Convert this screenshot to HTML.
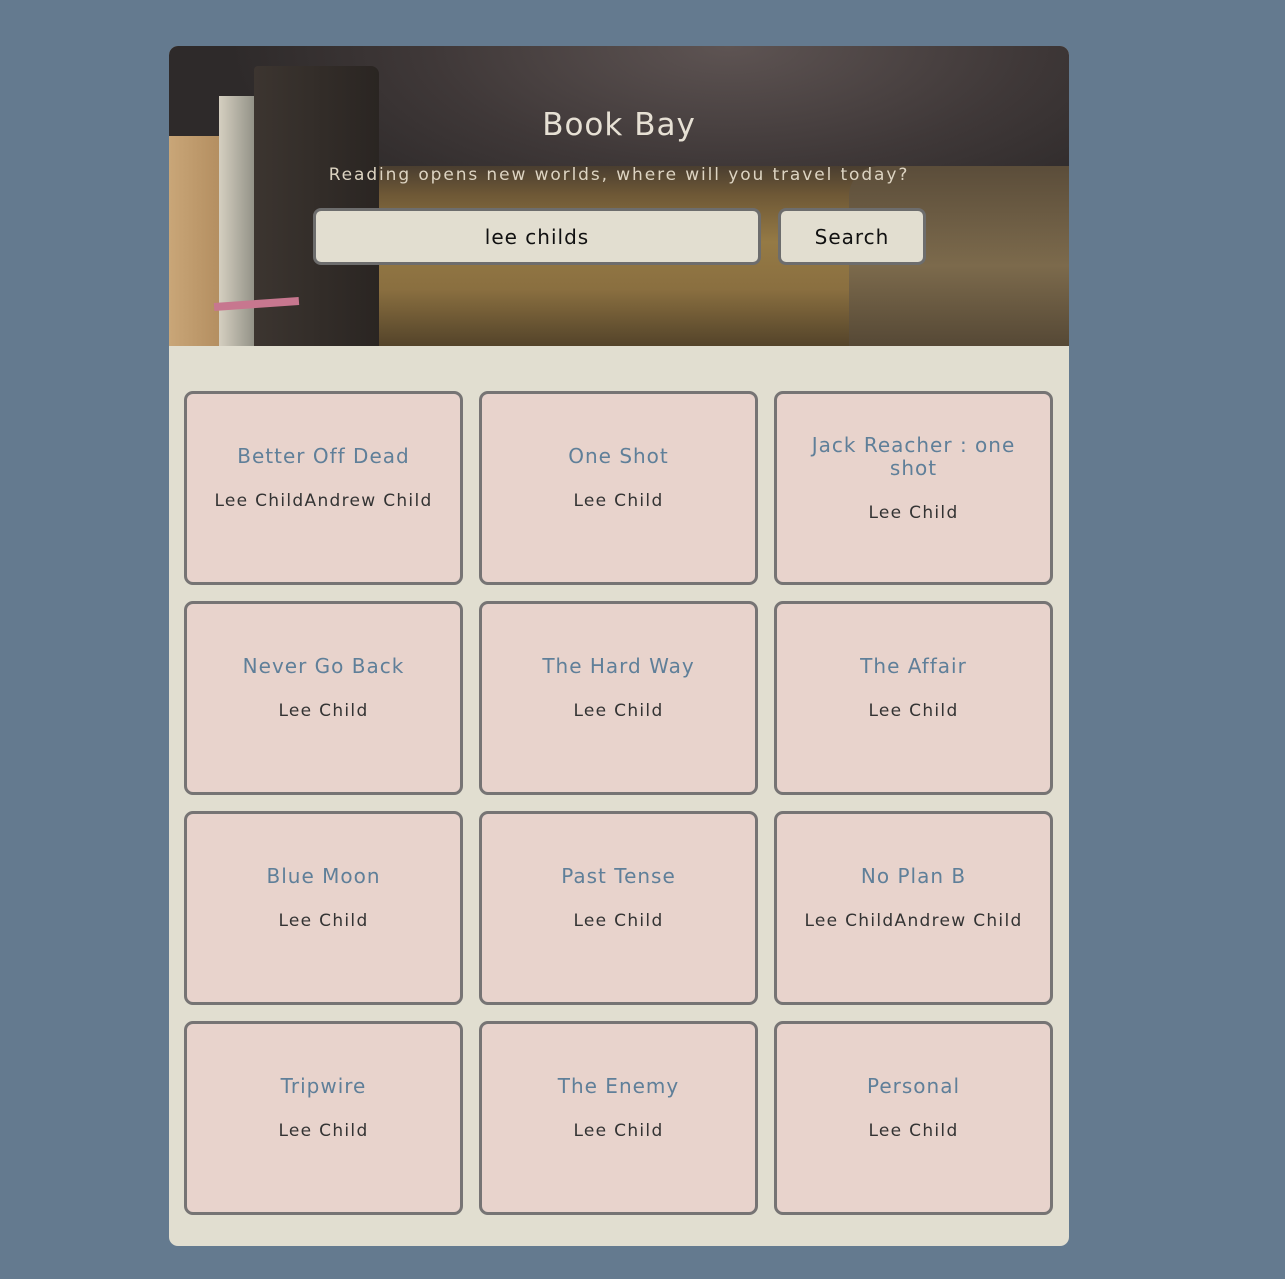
<!DOCTYPE html>
<html><head><meta charset="utf-8"><style>
*{margin:0;padding:0;box-sizing:border-box}
body{width:1285px;height:1279px;background:#647a8f;font-family:"DejaVu Sans","Liberation Sans",sans-serif;position:relative;overflow:hidden}
.wrap{position:absolute;left:169px;top:46px;width:900px;height:1200px;background:#e1ded0;border-radius:9px;overflow:hidden}
.hdr{position:absolute;left:0;top:0;width:900px;height:300px;overflow:hidden;
background:radial-gradient(ellipse 500px 200px at 560px 0px,#5e5453 0%,#3f3838 60%,#2e2a2a 100%)}
.gold{position:absolute;left:110px;top:120px;width:790px;height:190px;
background:linear-gradient(180deg,#4a3e30 0%,#6e5836 15%,#957a45 40%,#8a6f40 65%,#4a3c26 100%);border-radius:40px 60px 0 0}
.gold2{position:absolute;left:680px;top:120px;width:220px;height:200px;background:linear-gradient(180deg,#5b4d3a,#7c6a4c 50%,#4c4030);border-radius:30px 0 0 0}
.b1{position:absolute;left:0;top:90px;width:60px;height:210px;background:linear-gradient(90deg,#c9a678,#b08a5c)}
.b2{position:absolute;left:50px;top:50px;width:40px;height:250px;background:linear-gradient(90deg,#d5cfc0,#8a8a80)}
.b3{position:absolute;left:85px;top:20px;width:125px;height:280px;background:linear-gradient(90deg,#3c3530,#2a2522);border-radius:4px 8px 0 0}
.band{position:absolute;left:45px;top:254px;width:85px;height:8px;background:#c7778f;transform:rotate(-4deg)}
h1{position:absolute;left:0;width:900px;top:61px;text-align:center;color:#e6e0d4;font-weight:normal;font-size:31px;letter-spacing:1px}
.sub{position:absolute;left:0;width:900px;top:119px;text-align:center;color:#ddd4c2;font-size:17px;letter-spacing:1.9px}
.inp{position:absolute;left:144px;top:162px;width:448px;height:57px;background:#e2ded0;border:3px solid #6d6d6d;border-radius:8px;text-align:center;line-height:53px;font-size:20px;letter-spacing:1px;color:#111}
.btn{position:absolute;left:609px;top:162px;width:148px;height:57px;background:#e2ded0;border:3px solid #6d6d6d;border-radius:8px;text-align:center;line-height:53px;font-size:20px;letter-spacing:1px;color:#111}
.card{position:absolute;width:279px;height:194px;background:#e8d3cc;border:3px solid #767474;border-radius:9px;display:flex;flex-direction:column;justify-content:center;align-items:center;padding:0 30px 20px;text-align:center}
.t{color:#5f7f99;font-size:20px;line-height:23px;letter-spacing:1px}
.a{color:#333;font-size:17px;margin-top:23px;letter-spacing:1.3px;white-space:nowrap}
</style></head><body>
<div class="wrap">
<div class="hdr">
<div class="gold"></div><div class="gold2"></div>
<div class="b1"></div><div class="b2"></div><div class="b3"></div><div class="band"></div>
<h1>Book Bay</h1>
<div class="sub">Reading opens new worlds, where will you travel today?</div>
<div class="inp">lee childs</div>
<div class="btn">Search</div>
</div>
</div>
<div class="card" style="left:184px;top:391px"><div class="t">Better Off Dead</div><div class="a">Lee ChildAndrew Child</div></div>
<div class="card" style="left:479px;top:391px"><div class="t">One Shot</div><div class="a">Lee Child</div></div>
<div class="card" style="left:774px;top:391px"><div class="t">Jack Reacher : one shot</div><div class="a">Lee Child</div></div>
<div class="card" style="left:184px;top:601px"><div class="t">Never Go Back</div><div class="a">Lee Child</div></div>
<div class="card" style="left:479px;top:601px"><div class="t">The Hard Way</div><div class="a">Lee Child</div></div>
<div class="card" style="left:774px;top:601px"><div class="t">The Affair</div><div class="a">Lee Child</div></div>
<div class="card" style="left:184px;top:811px"><div class="t">Blue Moon</div><div class="a">Lee Child</div></div>
<div class="card" style="left:479px;top:811px"><div class="t">Past Tense</div><div class="a">Lee Child</div></div>
<div class="card" style="left:774px;top:811px"><div class="t">No Plan B</div><div class="a">Lee ChildAndrew Child</div></div>
<div class="card" style="left:184px;top:1021px"><div class="t">Tripwire</div><div class="a">Lee Child</div></div>
<div class="card" style="left:479px;top:1021px"><div class="t">The Enemy</div><div class="a">Lee Child</div></div>
<div class="card" style="left:774px;top:1021px"><div class="t">Personal</div><div class="a">Lee Child</div></div>
</body></html>
